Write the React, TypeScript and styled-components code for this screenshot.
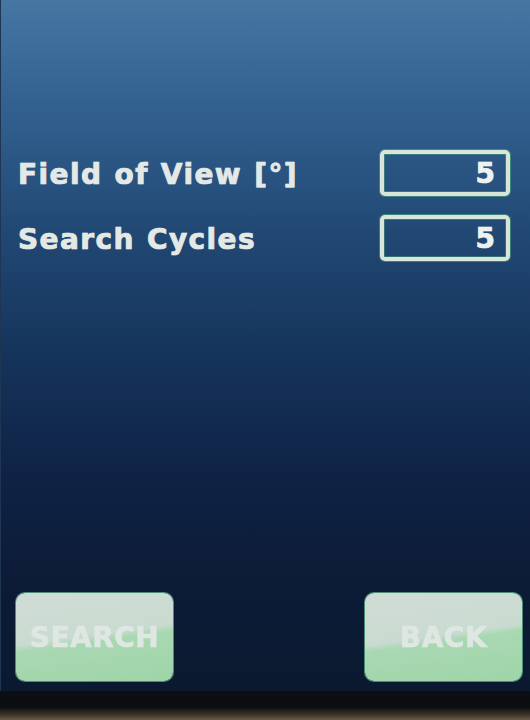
import React from "react";
import styled, { createGlobalStyle } from "styled-components";

const Global = createGlobalStyle`
  html, body { margin: 0; padding: 0; background: #0b0d10; }
  #root { width: 530px; height: 720px; }
`;

const Screen = styled.div`
  width: 530px;
  height: 720px;
  display: flex;
  flex-direction: column;
  overflow: hidden;
  font-family: "DejaVu Sans", "Liberation Sans", sans-serif;
`;

const Display = styled.div`
  flex: 1;
  display: flex;
  flex-direction: column;
  background: linear-gradient(
    180deg,
    #4676a2 0px,
    #3a6a98 60px,
    #2c5886 150px,
    #1f4570 250px,
    #15335a 360px,
    #0f2346 470px,
    #0c1b36 580px,
    #0b1930 691px
  );
  border-left: 1px solid #1e3654;
`;

const Form = styled.div`
  display: flex;
  flex-direction: column;
  gap: 19px;
  padding: 150px 20px 0 17px;
`;

const Row = styled.div`
  display: flex;
  align-items: center;
  justify-content: space-between;
  height: 46px;
`;

const Label = styled.span`
  color: #e4e9e6;
  font-weight: bold;
  font-size: 28px;
  letter-spacing: 1.4px;
  word-spacing: 1px;
  -webkit-text-stroke: 0.7px #e4e9e6;
  text-shadow: 0 0 1px rgba(230, 240, 235, 0.6);
  padding-top: 2px;
`;

const Field = styled.div`
  box-sizing: border-box;
  width: 130px;
  height: 46px;
  border: 4px solid #d8e6da;
  border-radius: 5px;
  box-shadow: 0 0 0 1px rgba(90, 200, 130, 0.45), inset 0 0 0 1px rgba(90, 200, 130, 0.35);
  display: flex;
  align-items: center;
  justify-content: flex-end;
  padding-right: 11px;
  color: #eef2ef;
  font-weight: bold;
  font-size: 28px;
  -webkit-text-stroke: 0.7px #eef2ef;
  text-shadow: 0 0 1px rgba(230, 240, 235, 0.6);
`;

const Spacer = styled.div`
  flex: 1;
`;

const ButtonRow = styled.div`
  display: flex;
  justify-content: space-between;
  padding: 0 8px 10px 15px;
`;

const Button = styled.div`
  width: 157px;
  height: 88px;
  border-radius: 9px;
  background: linear-gradient(
    172deg,
    #d0dcd6 0%,
    #c9dbd0 48%,
    #a9d8b2 54%,
    #9fd5a9 100%
  );
  box-shadow: 0 0 0 1px rgba(120, 220, 160, 0.6);
  display: flex;
  align-items: center;
  justify-content: center;
  color: #dfe7e3;
  font-family: "DejaVu Sans", sans-serif;
  font-weight: bold;
  font-size: 28px;
  letter-spacing: 0.5px;
  -webkit-text-stroke: 0.6px #dfe7e3;
  filter: blur(0.4px);
`;

const Bezel = styled.div`
  height: 29px;
  background: linear-gradient(180deg, #0b0e13 0%, #0b0d10 55%, #3a3128 80%, #6a5a48 100%);
`;

export default function App() {
  return (
    <Screen>
      <Global />
      <Display>
        <Form>
          <Row>
            <Label>Field of View [°]</Label>
            <Field>5</Field>
          </Row>
          <Row>
            <Label>Search Cycles</Label>
            <Field>5</Field>
          </Row>
        </Form>
        <Spacer />
        <ButtonRow>
          <Button>SEARCH</Button>
          <Button>BACK</Button>
        </ButtonRow>
      </Display>
      <Bezel />
    </Screen>
  );
}
